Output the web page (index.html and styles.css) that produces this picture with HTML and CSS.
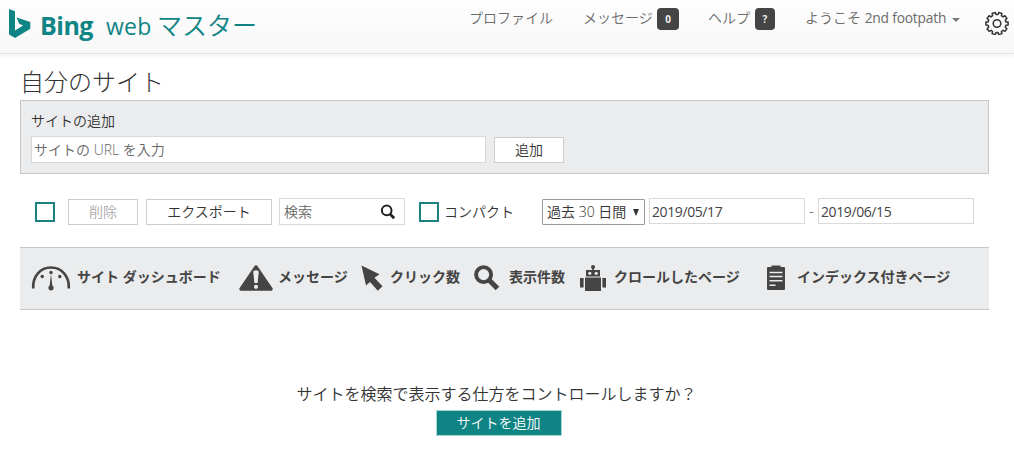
FILE: index.html
```html
<!DOCTYPE html>
<html lang="ja">
<head>
<meta charset="utf-8">
<title>Bing web マスター</title>
<link rel="stylesheet" href="styles.css">
</head>
<body>
<header class="header">
  <div class="brand">
    <svg class="brand-logo" width="22" height="30" viewBox="0 0 22 30"><path fill="#0f8484" d="M0 0l6 2.200V21.500l8.200-4.900-4-1.900-2.600-6.300L21.300 13v6.700L6.100 29 0 25.600z"/></svg>
    <span class="brand-name">Bing</span>
    <span class="brand-web">web</span>
    <span class="brand-master">マスター</span>
  </div>
  <nav class="nav">
    <a class="nav-profile">プロファイル</a>
    <a class="nav-messages">メッセージ</a><span class="badge badge-count">0</span>
    <a class="nav-help">ヘルプ</a><span class="badge badge-help">?</span>
    <a class="nav-user">ようこそ <span class="latin">2nd footpath</span></a><i class="caret"></i>
    <svg class="gear" width="24" height="24" viewBox="0 0 24 24" fill="none" stroke="#333" stroke-width="1.500" stroke-linejoin="round"><path d="M10.300 1.500L11 3.600h2l.7-2.100 3.200 1-.5 2.200 1.600 1.200 1.900-1.200 2 2.700-1.600 1.600.6 1.900 2.200.2v2.800l-2.200.3-.6 1.900 1.600 1.600-2 2.700-1.900-1.100-1.600 1.200.5 2.100-3.200 1-.7-2h-2l-.7 2-3.200-1 .5-2.100L6 19.300l-1.900 1.100-2-2.700 1.600-1.600-.6-1.900-2.200-.3v-2.800l2.200-.2.600-1.900-1.600-1.600 2-2.700L6 5.900l1.600-1.200-.5-2.200z"/><circle cx="12" cy="12.500" r="3.800"/></svg>
  </nav>
</header>
<main class="main">
  <h1 class="title">自分のサイト</h1>
  <section class="add-panel">
    <div class="add-label">サイトの追加</div>
    <div class="add-row">
      <div class="field url-field">サイトの URL を入力</div>
      <div class="button add-button">追加</div>
    </div>
  </section>
  <section class="toolbar">
    <span class="checkbox"></span>
    <div class="button delete-button">削除</div>
    <div class="button export-button">エクスポート</div>
    <div class="field search-field"><span>検索</span>
      <svg width="16" height="16" viewBox="0 0 16 16" fill="none" stroke="#222"><circle cx="6.700" cy="6.400" r="4.800" stroke-width="2"/><path d="M10 10l4.200 4.200" stroke-width="2.800"/></svg>
    </div>
    <span class="checkbox compact-box"></span>
    <span class="compact-label">コンパクト</span>
    <div class="select"><span>過去 30 日間</span><i class="select-arrow"></i></div>
    <div class="field date-field">2019/05/17</div>
    <span class="dash">-</span>
    <div class="field date-field">2019/06/15</div>
  </section>
  <section class="columns">
    <div class="column col-dashboard">
      <svg width="40" height="26" viewBox="0 0 40 26" fill="#444"><path d="M2.200 23.500C1.500 11 9.500 2.500 20 2.500s18.500 8.500 17.800 21" fill="none" stroke="#444" stroke-width="2.600"/><path d="M20 9l1.500 13h-3z"/><circle cx="20" cy="22.800" r="2.600"/><circle cx="20" cy="7.500" r="1.700"/><circle cx="11.200" cy="11.500" r="1.700"/><circle cx="28.800" cy="11.500" r="1.700"/></svg>
      <span>サイト ダッシュボード</span>
    </div>
    <div class="column col-messages">
      <svg width="34" height="26" viewBox="0 0 34 26"><path d="M17 2L32 24H2z" fill="#444" stroke="#444" stroke-width="3.400" stroke-linejoin="round"/><path d="M14.200 6.500q2.800-2.500 5.600 0L18.600 18h-3.200z" fill="#ebeced"/><circle cx="17" cy="21.800" r="2.100" fill="#ebeced"/></svg>
      <span>メッセージ</span>
    </div>
    <div class="column col-clicks">
      <svg width="22" height="26" viewBox="0 0 22 26" fill="#444"><path d="M.5.500l18 8.800-5 3.500 8 8.400-4.700 4.500-7.800-8.600L5 20.500z"/></svg>
      <span>クリック数</span>
    </div>
    <div class="column col-views">
      <svg width="26" height="26" viewBox="0 0 26 26" fill="none" stroke="#444"><circle cx="9.600" cy="9.600" r="7.500" stroke-width="3.900"/><path d="M15 15l8.500 8.500" stroke-width="5.200"/></svg>
      <span>表示件数</span>
    </div>
    <div class="column col-crawled">
      <svg width="26" height="26" viewBox="0 0 26 26" fill="#444"><circle cx="13" cy="2" r="2"/><path d="M12.200 2h1.600v4h-1.600zM6 5h14v6.500H6zM5 12.500h16V26H5zM0 13h3.600v9.500H0zM22.400 13H26v9.500h-3.600z"/><circle cx="9.800" cy="8.300" r="1.600" fill="#ebeced"/><circle cx="16.200" cy="8.300" r="1.600" fill="#ebeced"/></svg>
      <span>クロールしたページ</span>
    </div>
    <div class="column col-indexed">
      <svg width="18" height="25" viewBox="0 0 18 25"><path d="M1 2h3.500V.500h9V2H17q1 0 1 1v21q0 1-1 1H1q-1 0-1-1V3q0-1 1-1z" fill="#444"/><path d="M2.500 7.500h13M2.500 11.500h13M2.500 15.800h13M2.500 20.300h6" stroke="#ebeced" stroke-width="1.500"/></svg>
      <span>インデックス付きページ</span>
    </div>
  </section>
  <section class="empty">
    <p class="empty-text">サイトを検索で表示する仕方をコントロールしますか？</p>
    <div class="primary-button">サイトを追加</div>
  </section>
</main>
</body>
</html>
```
FILE: styles.css
```css
* { box-sizing: border-box; }
body {
  margin: 0;
  background: #fff;
  color: #333;
  font: 350 14px/20px "Open Sans", "Noto Sans CJK JP", sans-serif;
  white-space: nowrap;
}
.header {
  display: flex;
  height: 54px;
  background: linear-gradient(#fefefe, #f7f7f7);
  border-bottom: 1px solid #e3e3e3;
  box-shadow: 0 1px 5px rgba(0, 0, 0, .08);
}
.brand { display: flex; width: 469px; padding-left: 9px; color: #0f8484; line-height: 36px; }
.brand-logo { margin-top: 9px; }
.brand-name { width: 66px; padding: 7px 0 0 9px; font-size: 25px; font-weight: 700; letter-spacing: -.5px; }
.brand-web { width: 52px; padding: 8px 0 0 9px; font-size: 23px; font-weight: 400; letter-spacing: .3px; }
.brand-master { padding: 7px 0 0 8px; font-size: 25px; }
.nav { display: flex; height: 36px; align-items: center; color: #6b6b6b; flex: 1; }
.nav-profile { width: 114px; }
.nav-messages { width: 74px; }
.nav-help { width: 47px; }
.nav-user { width: 156px; }
.latin { font-weight: 400; letter-spacing: -.2px; font-size: 13.800px; }
.badge {
  height: 22px;
  margin-top: 2px;
  border-radius: 4px;
  background: #444;
  color: #eee;
  font: 700 10px/22px "Open Sans", sans-serif;
  text-align: center;
}
.badge-count { width: 22px; margin-right: 29px; }
.badge-help { width: 20px; margin-right: 30px; }
.caret { margin-left: -9px; margin-top: 3px; border: 4px solid transparent; border-top-color: #777; border-bottom: 0; }
.gear { margin-left: 25px; margin-top: 10px; }
.main { padding: 13px 25px 0 20px; }
.title { height: 32px; margin: 0; margin-bottom: 1px; font-size: 24px; line-height: 30px; font-weight: 300; }
.add-panel { height: 74px; padding: 10px; background: #ebeced; border: 1px solid #c5c6c8; }
.add-label { height: 25px; }
.add-row { display: flex; gap: 8px; }
.field { background: #fff; border: 1px solid #d9d9d9; height: 26px; line-height: 25px; padding-left: 2px; color: #444; }
.url-field { width: 455px; height: 27px; padding-left: 2px; color: #666; }
.button { height: 26px; border: 1px solid #ccc; background: #fff; line-height: 24px; text-align: center; }
.add-button { width: 70px; margin-top: 1px; }
.toolbar { display: flex; height: 73px; padding: 24px 0 0 15px; }
.checkbox { width: 20px; height: 20px; margin: 4px 13px 0 0; border: 2px solid #1a8080; }
.delete-button { width: 70px; margin: 1px 8px 0 0; color: #aaa; }
.export-button { width: 126px; margin: 1px 7px 0 0; }
.search-field { display: flex; justify-content: space-between; align-items: center; width: 126px; height: 27px; padding: 0 8px 0 4px; color: #666; }
.compact-box { margin: 4px 5px 0 14px; }
.compact-label { width: 98px; padding-top: 4px; }
.select { display: flex; align-items: center; justify-content: space-between; width: 103px; height: 26px; margin: 1px 4px 0 0; padding: 0 5px 0 4px; border: 1px solid #999; border-radius: 1px; }
.select-arrow { border: 3.500px solid transparent; border-top: 7px solid #333; border-bottom: 0; }
.date-field { width: 156px; font-weight: 400; letter-spacing: -.4px; }
.dash { width: 13px; padding-top: 3px; text-align: center; }
.columns { display: flex; align-items: center; height: 63px; padding-left: 11px; background: #ebeced; border-top: 1px solid #c5c6c8; border-bottom: 1px solid #c5c6c8; }
.column { display: flex; align-items: center; flex: none; color: #444; font-weight: 700; }
.column svg { position: relative; top: -1px; }
.column span { padding-bottom: 4px; }
.col-dashboard { width: 208px; gap: 6px; }
.col-messages { width: 122px; gap: 5px; }
.col-clicks { width: 113px; gap: 7px; }
.col-views { width: 106px; gap: 9px; }
.col-crawled { width: 187px; gap: 8px; }
.col-indexed { gap: 12px; }
.empty { display: flex; flex-direction: column; align-items: center; padding: 74px 0 0; margin-right: 17px; margin-left: 5px; }
.empty-text { margin: 0; height: 26px; padding-right: 4px; font-size: 16px; line-height: 20px; }
.primary-button { width: 126px; height: 26px; border: 1px solid #a9d5d5; background: #0f8484; color: #fff; line-height: 24px; text-align: center; }
```
